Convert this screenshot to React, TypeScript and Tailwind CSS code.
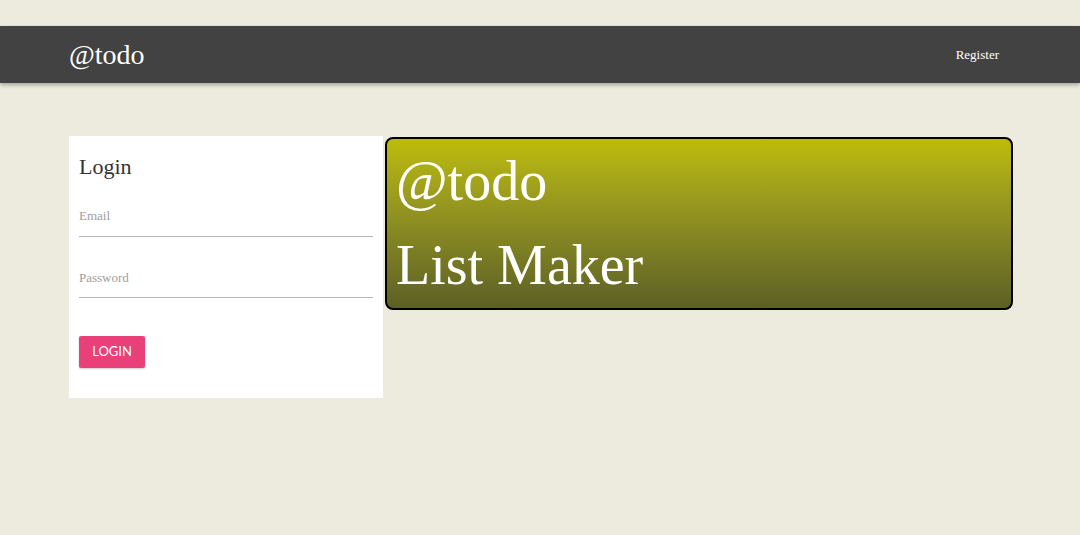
import React from "react";

export default function App() {
  return (
    <div className="min-h-[535px] w-full bg-[#ecebde] pt-[26px]" style={{ fontFamily: '"Liberation Serif", "Times New Roman", serif' }}>
      <nav className="h-[57px] bg-[#424242] shadow-[0_2px_4px_rgba(0,0,0,0.3)] flex items-center justify-between pl-[69px] pr-[81px]">
        <span className="text-[28px] text-white leading-none">@todo</span>
        <span className="text-[13px] text-white">Register</span>
      </nav>
      <div className="flex items-start pl-[69px] pt-[53px] gap-[2px]">
        <div className="w-[314px] h-[262px] bg-white px-[10px] pt-[18px]">
          <h2 className="text-[22px] text-[#333] leading-[26px]">Login</h2>
          <div className="mt-[27px]">
            <div className="text-[13px] text-[#9e9e9e] leading-[18px]">Email</div>
            <div className="mt-[11px] h-px bg-[#b5b5b5]" />
          </div>
          <div className="mt-[32px]">
            <div className="text-[13px] text-[#9e9e9e] leading-[18px]">Password</div>
            <div className="mt-[10px] h-px bg-[#b5b5b5]" />
          </div>
          <button className="mt-[38px] h-[32px] w-[66px] bg-[#ea407a] text-white text-[13px] rounded-[2px] shadow-[0_1px_2px_rgba(0,0,0,0.2)]" style={{ fontFamily: 'Lato, "Liberation Sans", sans-serif' }}>
            LOGIN
          </button>
        </div>
        <div className="w-[628px] h-[173px] mt-[1px] rounded-[8px] border-2 border-black bg-gradient-to-b from-[#bdbc08] to-[#5d6024] pl-[9px] pr-[10px] text-white">
          <div className="text-[56px] leading-[56px] mt-[14px]">@todo</div>
          <div className="text-[56px] leading-[56px] mt-[28px]">List Maker</div>
        </div>
      </div>
    </div>
  );
}
